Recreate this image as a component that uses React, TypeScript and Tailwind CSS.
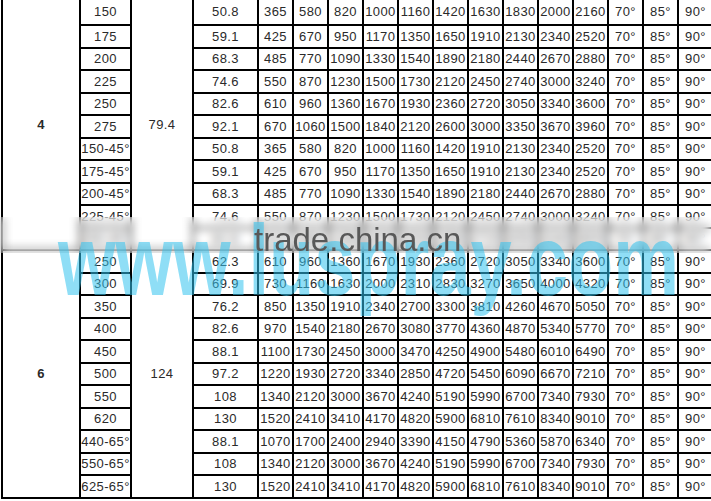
import React from 'react';

type Row = { size: string; d: string; vals: string[] };

const angles = ['70°', '85°', '90°'];

const groupA: Row[] = [
  { size: '150', d: '50.8', vals: ['365', '580', '820', '1000', '1160', '1420', '1630', '1830', '2000', '2160'] },
  { size: '175', d: '59.1', vals: ['425', '670', '950', '1170', '1350', '1650', '1910', '2130', '2340', '2520'] },
  { size: '200', d: '68.3', vals: ['485', '770', '1090', '1330', '1540', '1890', '2180', '2440', '2670', '2880'] },
  { size: '225', d: '74.6', vals: ['550', '870', '1230', '1500', '1730', '2120', '2450', '2740', '3000', '3240'] },
  { size: '250', d: '82.6', vals: ['610', '960', '1360', '1670', '1930', '2360', '2720', '3050', '3340', '3600'] },
  { size: '275', d: '92.1', vals: ['670', '1060', '1500', '1840', '2120', '2600', '3000', '3350', '3670', '3960'] },
  { size: '150-45°', d: '50.8', vals: ['365', '580', '820', '1000', '1160', '1420', '1910', '2130', '2340', '2520'] },
  { size: '175-45°', d: '59.1', vals: ['425', '670', '950', '1170', '1350', '1650', '1910', '2130', '2340', '2520'] },
  { size: '200-45°', d: '68.3', vals: ['485', '770', '1090', '1330', '1540', '1890', '2180', '2440', '2670', '2880'] },
  { size: '225-45°', d: '74.6', vals: ['550', '870', '1230', '1500', '1730', '2120', '2450', '2740', '3000', '3240'] },
  { size: '250-45°', d: '82.6', vals: ['610', '960', '1360', '1670', '1930', '2360', '2720', '3050', '3340', '3600'] },
];

const groupB: Row[] = [
  { size: '250', d: '62.3', vals: ['610', '960', '1360', '1670', '1930', '2360', '2720', '3050', '3340', '3600'] },
  { size: '300', d: '69.9', vals: ['730', '1160', '1630', '2000', '2310', '2830', '3270', '3650', '4000', '4320'] },
  { size: '350', d: '76.2', vals: ['850', '1350', '1910', '2340', '2700', '3300', '3810', '4260', '4670', '5050'] },
  { size: '400', d: '82.6', vals: ['970', '1540', '2180', '2670', '3080', '3770', '4360', '4870', '5340', '5770'] },
  { size: '450', d: '88.1', vals: ['1100', '1730', '2450', '3000', '3470', '4250', '4900', '5480', '6010', '6490'] },
  { size: '500', d: '97.2', vals: ['1220', '1930', '2720', '3340', '2850', '4720', '5450', '6090', '6670', '7210'] },
  { size: '550', d: '108', vals: ['1340', '2120', '3000', '3670', '4240', '5190', '5990', '6700', '7340', '7930'] },
  { size: '620', d: '130', vals: ['1520', '2410', '3410', '4170', '4820', '5900', '6810', '7610', '8340', '9010'] },
  { size: '440-65°', d: '88.1', vals: ['1070', '1700', '2400', '2940', '3390', '4150', '4790', '5360', '5870', '6340'] },
  { size: '550-65°', d: '108', vals: ['1340', '2120', '3000', '3670', '4240', '5190', '5990', '6700', '7340', '7930'] },
  { size: '625-65°', d: '130', vals: ['1520', '2410', '3410', '4170', '4820', '5900', '6810', '7610', '8340', '9010'] },
];

const groups = [
  { label: '4', bore: '79.4', rows: groupA },
  { label: '6', bore: '124', rows: groupB },
];

const cell = 'border-2 border-black p-0 text-center align-middle whitespace-nowrap';

const App = () => {
  return (
    <div className="relative w-[711px] h-[501px] overflow-hidden bg-white">
      <table
        className="ml-[1px] w-[711px] table-fixed border-collapse text-[13px] tracking-[0.4px] text-[#2a2a2a]"
        style={{ fontFamily: '"Liberation Sans", Arial, sans-serif' }}
      >
        <colgroup>
          <col className="w-[78px]" />
          <col className="w-[51px]" />
          <col className="w-[62px]" />
          <col className="w-[65px]" />
          {Array.from({ length: 13 }).map((_, i) => (
            <col key={i} className="w-[35px]" />
          ))}
        </colgroup>
        <tbody>
          {groups.map((g, gi) =>
            g.rows.map((r, ri) => {
              const first = gi === 0 && ri === 0;
              const c = first ? `${cell} border-t-0` : cell;
              return (
                <tr key={`${gi}-${ri}`} className={first ? 'h-[25px]' : 'h-[22.5px]'}>
                  {ri === 0 && (
                    <td rowSpan={g.rows.length} className={`${c} font-bold`}>
                      {g.label}
                    </td>
                  )}
                  <td className={c}>{r.size}</td>
                  {ri === 0 && (
                    <td rowSpan={g.rows.length} className={c}>
                      {g.bore}
                    </td>
                  )}
                  <td className={c}>{r.d}</td>
                  {r.vals.map((v, vi) => (
                    <td key={vi} className={c}>
                      {v}
                    </td>
                  ))}
                  {angles.map((a) => (
                    <td key={a} className={c}>
                      {a}
                    </td>
                  ))}
                </tr>
              );
            })
          )}
        </tbody>
      </table>

      {/* smeared watermark band */}
      <div className="absolute left-0 right-0 top-[217px] h-[36px] bg-white/25 backdrop-blur-[4px]" />

      {/* cyan site watermark */}
      <div
        className="pointer-events-none absolute left-[58px] top-[210px] origin-left scale-x-[0.74] whitespace-nowrap text-[100px] font-bold leading-none text-[#33c4ef] opacity-55"
        style={{ fontFamily: '"Liberation Sans", Arial, sans-serif' }}
      >
        www.luspray.com
      </div>

      {/* trade.china.cn watermark */}
      <div
        className="pointer-events-none absolute left-[254px] top-[223px] whitespace-nowrap text-[33px] leading-none text-[#585858]"
        style={{ fontFamily: '"Liberation Sans", Arial, sans-serif' }}
      >
        trade.china.cn
      </div>
    </div>
  );
};

export default App;
